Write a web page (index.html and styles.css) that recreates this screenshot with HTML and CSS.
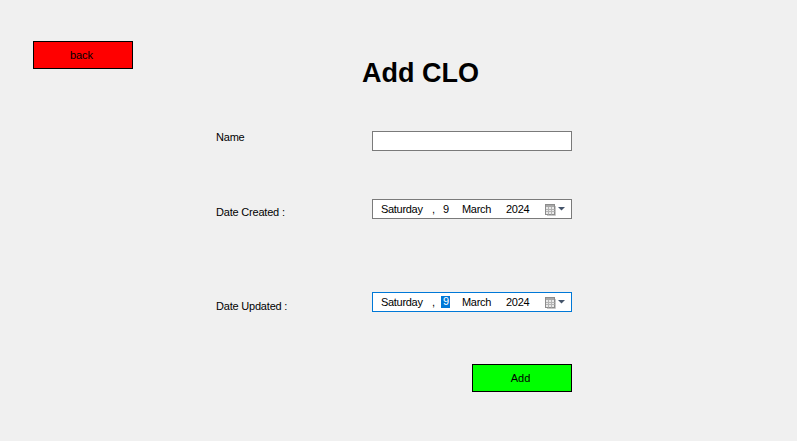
FILE: index.html
```html
<!DOCTYPE html>
<html>
<head>
<meta charset="utf-8">
<title>Add CLO</title>
<link rel="stylesheet" href="styles.css">
</head>
<body>
<div class="page">
  <div class="header">
    <button class="btn back">back</button>
    <h1 class="title">Add CLO</h1>
  </div>
  <div class="form">
    <div class="row">
      <label class="label">Name</label>
      <input class="textbox" type="text">
    </div>
    <div class="row row-created">
      <label class="label label-created">Date Created :</label>
      <div class="picker">
        <span class="seg seg-day">Saturday</span>
        <span class="seg seg-comma">,</span>
        <span class="seg seg-num">9</span>
        <span class="seg seg-month">March</span>
        <span class="seg seg-year">2024</span>
        <span class="cal">
          <svg width="11" height="12" viewBox="0 0 11 12">
            <rect x="0.5" y="0.5" width="9" height="10" fill="#e9e9e9" stroke="#8c8c8c"/>
            <rect x="1" y="1" width="8" height="2" fill="#a8a8a8"/>
            <path d="M1 5.5H9.5M1 7.5H9.5M3.5 3V10.5M6.5 3V10.5" stroke="#b4b4b4" stroke-width="1"/>
            <path d="M10.5 2V11.5H2" stroke="#c8c8c8" stroke-width="1" fill="none"/>
          </svg>
          <svg class="arrow" width="8" height="4" viewBox="0 0 8 4">
            <path d="M0 0H7L3.5 3.5Z" fill="#44546a"/>
          </svg>
        </span>
      </div>
    </div>
    <div class="row row-updated">
      <label class="label label-updated">Date Updated :</label>
      <div class="picker picker-focus">
        <span class="seg seg-day">Saturday</span>
        <span class="seg seg-comma">,</span>
        <span class="seg seg-num selected">9</span>
        <span class="seg seg-month">March</span>
        <span class="seg seg-year">2024</span>
        <span class="cal">
          <svg width="11" height="12" viewBox="0 0 11 12">
            <rect x="0.5" y="0.5" width="9" height="10" fill="#e9e9e9" stroke="#8c8c8c"/>
            <rect x="1" y="1" width="8" height="2" fill="#a8a8a8"/>
            <path d="M1 5.5H9.5M1 7.5H9.5M3.5 3V10.5M6.5 3V10.5" stroke="#b4b4b4" stroke-width="1"/>
            <path d="M10.5 2V11.5H2" stroke="#c8c8c8" stroke-width="1" fill="none"/>
          </svg>
          <svg class="arrow" width="8" height="4" viewBox="0 0 8 4">
            <path d="M0 0H7L3.5 3.5Z" fill="#44546a"/>
          </svg>
        </span>
      </div>
    </div>
    <div class="actions">
      <button class="btn add">Add</button>
    </div>
  </div>
</div>
</body>
</html>
```
FILE: styles.css
```css
html, body {
  margin: 0;
  padding: 0;
  background: #f0f0f0;
  font-family: "Liberation Sans", Arial, sans-serif;
  color: #000;
}

.page {
  padding: 41px 0 0 33px;
  height: 441px;
  box-sizing: border-box;
}

.header {
  display: flex;
  align-items: flex-start;
}

.btn {
  width: 100px;
  height: 28px;
  box-sizing: border-box;
  border: 1px solid #000;
  padding: 0 3px 0 0;
  margin: 0;
  font-family: "Liberation Sans", Arial, sans-serif;
  font-size: 11px;
  color: #000;
  line-height: 13px;
  text-align: center;
  cursor: pointer;
}

.back {
  background: #ff0000;
}

.add {
  background: #00ff00;
}

.title {
  margin: 16px 0 0 229px;
  font-size: 27px;
  font-weight: bold;
  line-height: 32px;
}

.form {
  margin: 42px 0 0 183px;
  display: flex;
  flex-direction: column;
}

.row {
  display: flex;
  align-items: flex-start;
}

.label {
  width: 156px;
  font-size: 11px;
  line-height: 13px;
  letter-spacing: -0.2px;
}

.row-created {
  margin-top: 48px;
}

.row-updated {
  margin-top: 73px;
}

.label-created {
  margin-top: 7px;
}

.label-updated {
  margin-top: 8px;
}

.textbox {
  width: 200px;
  height: 20px;
  box-sizing: border-box;
  border: 1px solid #7a7a7a;
  background: #fff;
  margin: 0;
  padding: 0 3px;
  font-size: 11px;
  outline: none;
}

.picker {
  width: 200px;
  height: 20px;
  box-sizing: border-box;
  border: 1px solid #7a7a7a;
  background: #fff;
  display: flex;
  align-items: flex-start;
  padding-left: 8px;
  font-size: 11px;
  letter-spacing: -0.3px;
}

.picker-focus {
  border-color: #0078d7;
}

.seg {
  line-height: 18px;
  white-space: nowrap;
}

.seg-day {
  width: 51px;
}

.seg-comma {
  width: 9px;
}

.seg-num {
  width: 9px;
  box-sizing: border-box;
  padding-left: 2px;
}

.selected {
  background: #0078d7;
  color: #fff;
  height: 12px;
  line-height: 10px;
  margin-top: 3px;
}

.seg-month {
  width: 44px;
  margin-left: 12px;
}

.seg-year {
  width: 39px;
}

.cal {
  display: flex;
  align-items: flex-start;
  margin-top: 4px;
}

.cal svg {
  display: block;
}

.cal .arrow {
  margin: 3px 0 0 2px;
}

.actions {
  margin-top: 51px;
  padding-left: 256px;
}
```
